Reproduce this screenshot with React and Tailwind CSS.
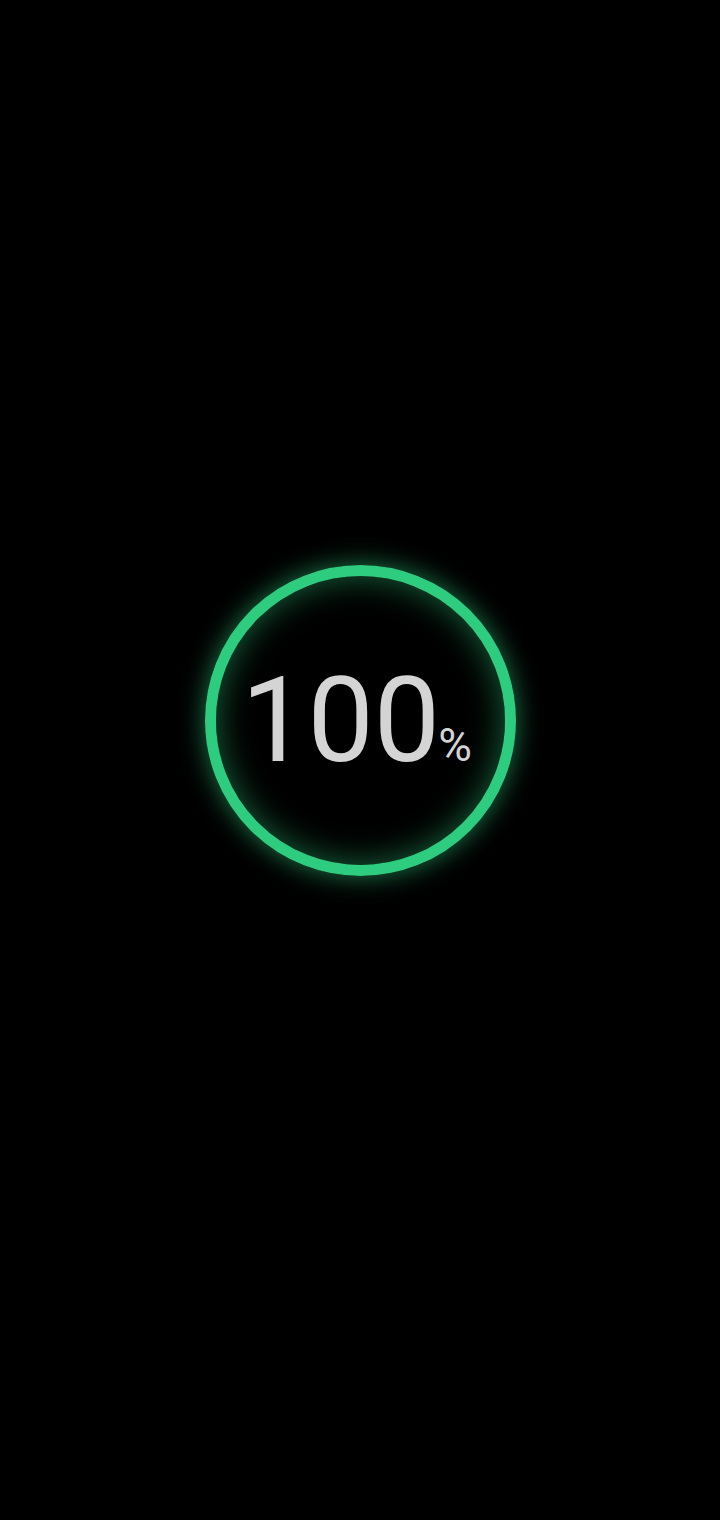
export default function App() {
  return (
    <div className="min-h-[1520px] bg-black pt-[565px] font-['Roboto',sans-serif]">
      <div className="mx-auto flex h-[311px] w-[311px] items-center justify-center rounded-full border-[11px] border-[#2ecc7e] shadow-[0_0_26px_rgba(46,204,126,0.6),inset_0_0_34px_rgba(46,204,126,0.5)]">
        <div className="flex items-baseline pr-[7px] text-[#d4d4d4]">
          <span className="text-[118px] leading-none">100</span>
          <span className="-ml-[2px] text-[46px] leading-none">%</span>
        </div>
      </div>
    </div>
  );
}
